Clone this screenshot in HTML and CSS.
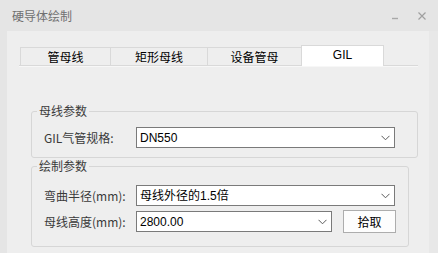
FILE: index.html
```html
<!DOCTYPE html>
<html lang="zh">
<head>
<meta charset="utf-8">
<link rel="stylesheet" href="styles.css">
</head>
<body>
<div class="window">
  <div class="titlebar">
    <span class="title">硬导体绘制</span>
    <svg class="ctl-min" width="8" height="8" viewBox="0 0 8 8"><path d="M1 5.5h6" stroke="#a8a8a8" stroke-width="1.4"/></svg>
    <svg class="ctl-close" width="10" height="10" viewBox="0 0 10 10"><path d="M1.5 1.5l7 7M8.5 1.5l-7 7" stroke="#a0a0a0" stroke-width="1.2"/></svg>
  </div>
  <div class="body">
    <div class="edge-left"></div>
    <div class="content">
      <div class="tabs">
        <div class="tab t1">管母线</div>
        <div class="tab t2">矩形母线</div>
        <div class="tab t3">设备管母</div>
        <div class="tab t4 active">GIL</div>
      </div>
      <div class="tabline"></div>

      <fieldset class="group g1">
        <legend>母线参数</legend>
        <div class="row">
          <span class="lbl">GIL气管规格:</span>
          <div class="combo wide"><span class="val">DN550</span><svg class="chev" width="9" height="6" viewBox="0 0 9 6"><path d="M0.5 0.8l4 4 4-4" fill="none" stroke="#5a5a5a" stroke-width="1"/></svg></div>
        </div>
      </fieldset>

      <fieldset class="group g2">
        <legend>绘制参数</legend>
        <div class="row">
          <span class="lbl">弯曲半径(mm):</span>
          <div class="combo wide"><span class="val">母线外径的1.5倍</span><svg class="chev" width="9" height="6" viewBox="0 0 9 6"><path d="M0.5 0.8l4 4 4-4" fill="none" stroke="#5a5a5a" stroke-width="1"/></svg></div>
        </div>
        <div class="row r2">
          <span class="lbl">母线高度(mm):</span>
          <div class="combo narrow"><span class="val">2800.00</span><svg class="chev" width="9" height="6" viewBox="0 0 9 6"><path d="M0.5 0.8l4 4 4-4" fill="none" stroke="#5a5a5a" stroke-width="1"/></svg></div>
          <button class="btn">拾取</button>
        </div>
      </fieldset>
    </div>
    <div class="edge-right"></div>
  </div>
</div>
</body>
</html>
```

FILE: styles.css
```css
* { box-sizing: border-box; }
html, body { margin: 0; padding: 0; }
body {
  background: #eeeeee;
  font-family: "Noto Sans CJK SC", "Liberation Sans", sans-serif;
  font-size: 12px;
  color: #000;
}
.window {
  width: 438px;
  height: 253px;
  display: flex;
  flex-direction: column;
  background: #eeeeee;
  overflow: hidden;
}
.titlebar {
  height: 31px;
  flex: none;
  display: flex;
  align-items: center;
  padding-left: 12px;
  background: #e5e5e5;
  color: #707070;
}
.title { flex: 1; line-height: 16px; }
.ctl-min { margin-right: 18px; margin-top: 3px; }
.ctl-close { margin-right: 11px; }
.body { flex: 1; display: flex; }
.edge-left { width: 7px; flex: none; background: #e5e5e5; }
.edge-right { width: 9px; flex: none; background: #e8e8e8; }
.content { flex: 1; padding-top: 13px; }

.tabs {
  display: flex;
  align-items: flex-end;
  margin-left: 13px;
  height: 21px;
}
.tab {
  height: 18px;
  border: 1px solid #d9d9d9;
  border-bottom: none;
  border-right: none;
  background: #eeeeee;
  text-align: center;
  line-height: 17px;
  color: #000;
}
.t1 { width: 90px; }
.t2 { width: 97px; }
.t3 { width: 94px; }
.tab.active {
  width: 83px;
  height: 21px;
  border-right: 1px solid #d9d9d9;
  background: #ffffff;
  line-height: 19px;
  font-family: "Liberation Sans", "Noto Sans CJK SC", sans-serif;
  position: relative;
  z-index: 1;
  margin-bottom: -1px;
}
.tabline {
  margin-left: 12px;
  width: 399px;
  height: 2px;
  border-top: 1px solid #d9d9d9;
  background: #f7f7f7;
}

.group {
  margin: 0 0 0 24px;
  border: 1px solid #d6d6d6;
  border-radius: 3px;
  padding: 0 0 0 12px;
  min-width: 0;
}
.group legend {
  margin-left: -7px;
  padding: 0 2px;
  line-height: 16px;
  color: #3a3a3a;
}
.g1 { width: 387px; margin-top: 36px; padding-top: 8px; padding-bottom: 9px; }
.g2 { width: 378px; padding-top: 11px; padding-bottom: 13px; }

.row { display: flex; align-items: center; }
.row.r2 { margin-top: 4px; }
.lbl { width: 92px; flex: none; color: #3a3a3a; line-height: 16px; }
.combo {
  height: 21px;
  border: 1px solid #7a7a7a;
  background: #fff;
  display: flex;
  align-items: center;
  padding: 0 4px 0 3px;
  font-family: "Liberation Sans", "Noto Sans CJK SC", sans-serif;
}
.combo .val { flex: 1; line-height: 16px; }
.combo .chev { flex: none; }
.wide { width: 259px; }
.narrow { width: 196px; }
.btn {
  margin-left: 11px;
  width: 53px;
  height: 23px;
  border: 1px solid #adadad;
  background: #fdfdfd;
  font-family: "Noto Sans CJK SC", sans-serif;
  font-size: 12px;
  color: #000;
  padding: 0;
  border-radius: 0;
}
```
